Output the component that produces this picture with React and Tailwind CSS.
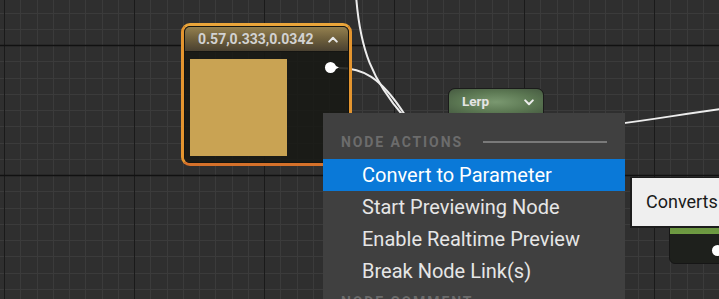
import React from "react";

const W = 719;
const H = 299;

function Grid() {
  const v = [];
  for (let k = -1; k < 46; k++) {
    const x = Math.round(4 + 16.25 * k);
    if (x >= 0 && x <= W) v.push({ x, major: ((k % 8) + 8) % 8 === 0 });
  }
  const h = [];
  for (let k = -4; k < 18; k++) {
    const y = Math.round(45 + 16.25 * k);
    if (y >= 0 && y <= H) h.push({ y, major: ((k % 8) + 8) % 8 === 0 });
  }
  return (
    <svg className="absolute inset-0" width={W} height={H}>
      {v.filter((l) => !l.major).map((l) => (
        <line key={"v" + l.x} x1={l.x + 0.5} y1={0} x2={l.x + 0.5} y2={H} stroke="#3b3b3b" strokeWidth="1" />
      ))}
      {h.filter((l) => !l.major).map((l) => (
        <line key={"h" + l.y} x1={0} y1={l.y + 0.5} x2={W} y2={l.y + 0.5} stroke="#3b3b3b" strokeWidth="1" />
      ))}
      {v.filter((l) => l.major).map((l) => (
        <line key={"V" + l.x} x1={l.x + 0.5} y1={0} x2={l.x + 0.5} y2={H} stroke="#1a1a1a" strokeWidth="1" />
      ))}
      {h.filter((l) => l.major).map((l) => (
        <line key={"H" + l.y} x1={0} y1={l.y + 0.5} x2={W} y2={l.y + 0.5} stroke="#111111" strokeWidth="1.3" />
      ))}
    </svg>
  );
}

function Wires() {
  return (
    <svg className="absolute inset-0" width={W} height={H} fill="none">
      <path d="M356 -5 C360 50, 372 80, 405 118" stroke="#ededed" strokeWidth="2" />
      <path d="M339 68 C362 68, 380 76, 405 115" stroke="#ededed" strokeWidth="2" />
      <path d="M560 130 C620 126, 680 114, 725 108.5" stroke="#ededed" strokeWidth="2" />
    </svg>
  );
}

function ChevronUp() {
  return (
    <svg width="10" height="7" viewBox="0 0 10 7" fill="none">
      <polyline points="1.2,5.6 5,1.8 8.8,5.6" stroke="#e8e8e8" strokeWidth="2" strokeLinecap="round" strokeLinejoin="round" />
    </svg>
  );
}

function ChevronDown() {
  return (
    <svg width="10" height="7" viewBox="0 0 10 7" fill="none">
      <polyline points="1.2,1.4 5,5.2 8.8,1.4" stroke="#ececec" strokeWidth="2" strokeLinecap="round" strokeLinejoin="round" />
    </svg>
  );
}

function ColorNode() {
  return (
    <div className="absolute left-[181px] top-[23px] w-[171px] h-[143px] rounded-[9px] border-[3px] border-t-[#eaa53a] border-x-[#e4952f] border-b-[#d5712a]">
      <div className="w-full h-full rounded-[6px] border border-[#14140f]">
        <div className="w-full h-full rounded-[5px] overflow-hidden flex flex-col bg-[rgba(24,25,21,0.88)]">
          <div className="h-[25px] shrink-0 flex items-center justify-between pl-[13px] pr-[10px] bg-gradient-to-b from-[#94804f] via-[#6e5f3c] to-[#4a4131] border-b border-[#151512]">
            <span className="text-[14px] font-bold leading-none text-[#d2d2d2]">0.57,0.333,0.0342</span>
            <ChevronUp />
          </div>
          <div className="relative flex-1">
            <div className="absolute left-[5px] top-[7px] w-[97px] h-[97px] bg-[#c9a353]" />
            <div className="absolute left-[140px] top-[10px] w-[11px] h-[11px] rounded-full bg-white" />
            <svg className="absolute left-[150px] top-[13px]" width="5" height="5" viewBox="0 0 5 5">
              <polygon points="0,0.5 4,2.5 0,4.5" fill="#ffffff" />
            </svg>
          </div>
        </div>
      </div>
    </div>
  );
}

function LerpNode() {
  return (
    <div className="absolute left-[448px] top-[88px] w-[96px] h-[60px] rounded-[7px] border border-[#1b1b1b] overflow-hidden bg-[#1e201c]">
      <div className="h-[26px] flex items-center justify-between pl-[13px] pr-[9px] bg-[radial-gradient(ellipse_at_center,#7a9870_0%,#5c7853_55%,#465a41_100%)]">
        <span className="text-[13.5px] font-bold leading-none text-[#e4e4e4]">Lerp</span>
        <ChevronDown />
      </div>
    </div>
  );
}

function RightNode() {
  return (
    <div className="absolute left-[669px] top-[205px] w-[90px] h-[59px] rounded-[6px] border border-[#161616] overflow-hidden flex flex-col bg-[#1e201c]">
      <div className="h-[28px] shrink-0 bg-gradient-to-b from-[#5a7a3a] to-[#6f9c42]" />
      <div className="relative flex-1">
        <div className="absolute left-[42px] top-[11px] w-[11px] h-[11px] rounded-full bg-white" />
      </div>
    </div>
  );
}

function Menu() {
  const items = [
    "Convert to Parameter",
    "Start Previewing Node",
    "Enable Realtime Preview",
    "Break Node Link(s)",
  ];
  return (
    <div className="absolute left-[323px] top-[113px] w-[302px] h-[220px] bg-[#404040] flex flex-col pt-[14px]">
      <div className="h-[30px] shrink-0 flex items-center pl-[18px] pr-[18px] gap-[20px] mb-[2px]">
        <span className="text-[14px] font-bold tracking-[1.9px] leading-none text-[#6c6c6c] whitespace-nowrap">NODE ACTIONS</span>
        <div className="flex-1 h-[2px] bg-[#7a7a7a]" />
      </div>
      {items.map((t, i) => (
        <div
          key={t}
          className={
            i === 0
              ? "h-[32px] shrink-0 flex items-center pl-[39px] bg-[#0a79d8] text-white text-[20px] leading-none whitespace-nowrap"
              : "h-[32px] shrink-0 flex items-center pl-[39px] text-[#e6e6e6] text-[20px] leading-none whitespace-nowrap"
          }
        >
          {t}
        </div>
      ))}
      <div className="h-[30px] shrink-0 flex items-center pl-[18px] pr-[18px] gap-[20px]">
        <span className="text-[14px] font-bold tracking-[1.9px] leading-none text-[#6c6c6c] whitespace-nowrap">NODE COMMENT</span>
        <div className="flex-1 h-[2px] bg-[#7a7a7a]" />
      </div>
    </div>
  );
}

function Tooltip() {
  return (
    <div className="absolute left-[630px] top-[177px] w-[130px] h-[51px] bg-[#efefef] border border-[#1c1c1c] border-l-2 border-b-2 flex items-center pl-[14px]">
      <span className="text-[18px] leading-none text-[#1a1a1a] whitespace-nowrap">Converts</span>
    </div>
  );
}

export default function App() {
  return (
    <div
      className="relative w-[719px] h-[299px] overflow-hidden bg-[#2f2f2f]"
      style={{ fontFamily: "Roboto, 'Noto Sans', 'Liberation Sans', sans-serif" }}
    >
      <Grid />
      <Wires />
      <ColorNode />
      <LerpNode />
      <RightNode />
      <Menu />
      <Tooltip />
    </div>
  );
}
